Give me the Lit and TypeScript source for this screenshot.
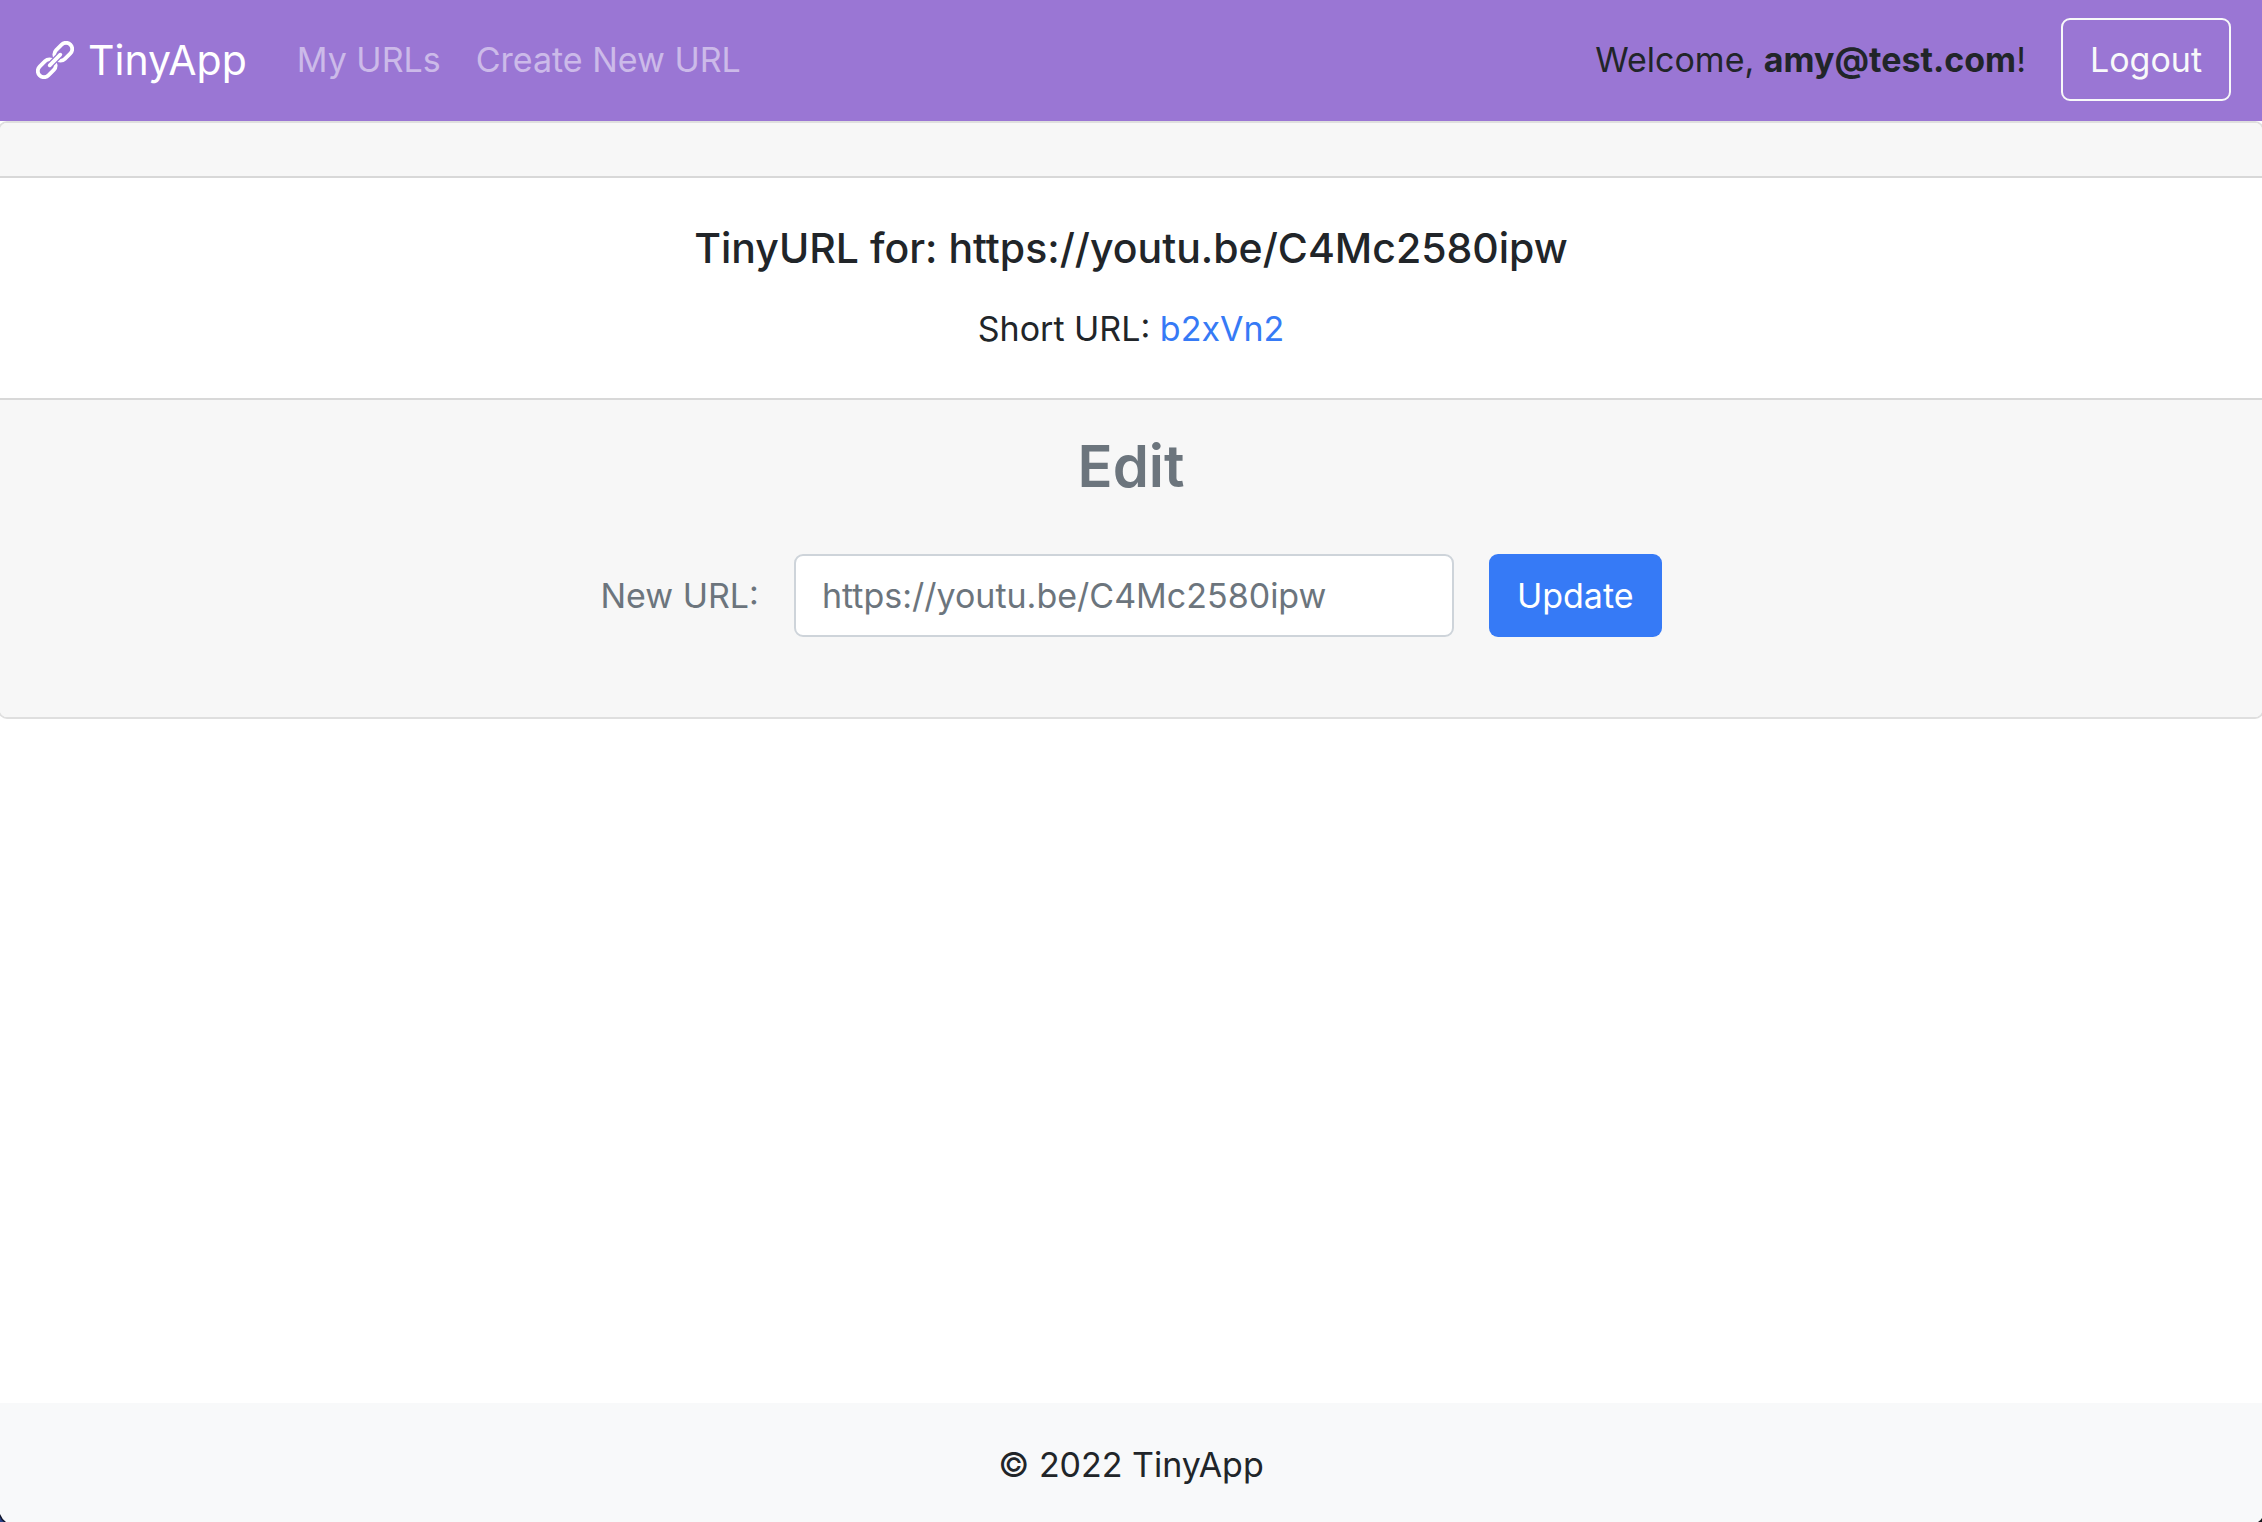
import { LitElement, html, css } from "lit";
import { customElement, property } from "lit/decorators.js";

@customElement("site-nav")
class SiteNav extends LitElement {
  @property() email = "";

  static styles = css`
    :host {
      display: block;
    }
    .bar {
      display: flex;
      align-items: center;
      padding: 18px 31px 20px 36px;
      background: #9a76d4;
      color: #212529;
    }
    .brand {
      display: flex;
      align-items: center;
      gap: 14px;
      margin-right: 50px;
      font-size: 41px;
      line-height: 64px;
      color: #fff;
      text-decoration: none;
    }
    .links {
      display: flex;
      gap: 35px;
      flex: 1;
      margin: 0;
      padding: 0;
      list-style: none;
    }
    .link {
      color: rgba(255, 255, 255, 0.5);
      text-decoration: none;
    }
    .session {
      display: flex;
      align-items: center;
      gap: 35px;
      margin: 0;
    }
    .logout {
      padding: 13px 27px;
      border: 2px solid #f8f9fa;
      border-radius: 9px;
      background: transparent;
      color: #f8f9fa;
      font: inherit;
    }
  `;

  render() {
    return html`
      <nav class="bar">
        <a class="brand" href="#">
          <svg width="38" height="38" viewBox="0 0 38 38" fill="none" aria-hidden="true">
            <g transform="rotate(-45 19 19)" stroke-linecap="round">
              <rect x="-2.8" y="12.8" width="20.2" height="12.4" rx="6.2" stroke="#fff" stroke-width="3.8" />
              <rect x="20.6" y="12.8" width="20.2" height="12.4" rx="6.2" stroke="#fff" stroke-width="3.8" />
              <path d="M11 19H27" stroke="#9a76d4" stroke-width="6.4" stroke-linecap="butt" />
              <path d="M11.5 19H26.5" stroke="#fff" stroke-width="3.8" />
            </g>
          </svg>
          <span>TinyApp</span>
        </a>
        <ul class="links">
          <li><a class="link" href="#urls">My URLs</a></li>
          <li><a class="link" href="#new">Create New URL</a></li>
        </ul>
        <form class="session" @submit=${(e: Event) => e.preventDefault()}>
          <span>Welcome, <b>${this.email}</b>!</span>
          <button class="logout" type="submit">Logout</button>
        </form>
      </nav>
    `;
  }
}

@customElement("url-card")
class UrlCard extends LitElement {
  @property() longUrl = "";
  @property() shortId = "";

  static styles = css`
    :host {
      display: block;
      overflow: hidden;
    }
    .card {
      margin: 0 -2px;
      border: 2px solid #dfdfdf;
      border-radius: 9px;
      background: #fff;
      text-align: center;
      overflow: hidden;
    }
    .head {
      height: 53px;
      border-bottom: 2px solid #d8d8d8;
      background: #f7f7f7;
    }
    .body {
      padding: 44px 44px 43px;
    }
    .title {
      margin: 0 0 27px;
      font-size: 41px;
      font-weight: 500;
      line-height: 53px;
    }
    .text {
      margin: 0;
    }
    .short {
      color: #367af6;
      text-decoration: none;
    }
    .foot {
      padding: 35px 44px 80px;
      border-top: 2px solid #d8d8d8;
      background: #f7f7f7;
      color: #6c757d;
    }
    .heading {
      margin: 0 0 57px;
      font-size: 58px;
      font-weight: 600;
      line-height: 62px;
    }
    .form {
      display: flex;
      justify-content: center;
      align-items: center;
      gap: 35px;
    }
    .input {
      box-sizing: border-box;
      width: 660px;
      height: 83px;
      padding: 13px 26px;
      border: 2px solid #ced4da;
      border-radius: 9px;
      background: #fff;
      color: #495057;
      font: inherit;
    }
    .input::placeholder {
      color: #6c757d;
      opacity: 1;
    }
    .update {
      padding: 15px 28px;
      border: 0;
      border-radius: 9px;
      background: #367af6;
      color: #fff;
      font: inherit;
    }
  `;

  render() {
    return html`
      <section class="card">
        <div class="head"></div>
        <div class="body">
          <h5 class="title">TinyURL for: ${this.longUrl}</h5>
          <p class="text">Short URL: <a class="short" href="#${this.shortId}">${this.shortId}</a></p>
        </div>
        <div class="foot">
          <h3 class="heading">Edit</h3>
          <form class="form" @submit=${(e: Event) => e.preventDefault()}>
            <label for="new-url">New URL:</label>
            <input class="input" id="new-url" type="text" placeholder=${this.longUrl} />
            <button class="update" type="submit">Update</button>
          </form>
        </div>
      </section>
    `;
  }
}

@customElement("app-root")
class AppRoot extends LitElement {
  static styles = css`
    :host {
      display: block;
      font-family: Inter, "Liberation Sans", sans-serif;
      font-size: 34px;
      line-height: 53px;
      color: #212529;
      background: #fff;
    }
    .page {
      position: relative;
      display: flex;
      flex-direction: column;
      min-height: 100vh;
    }
    .main {
      flex: 1;
    }
    .footer {
      padding: 35px 36px 31px;
      background: #f8f9fa;
      text-align: center;
    }
    .corner {
      position: absolute;
      bottom: 0;
    }
    .left {
      left: 0;
    }
    .right {
      right: 0;
    }
  `;

  render() {
    return html`
      <div class="page">
        <site-nav email="amy@test.com"></site-nav>
        <main class="main">
          <url-card longUrl="https://youtu.be/C4Mc2580ipw" shortId="b2xVn2"></url-card>
        </main>
        <footer class="footer">© 2022 TinyApp</footer>
        <svg class="corner left" width="6" height="8" viewBox="0 0 6 8" aria-hidden="true">
          <path d="M0 0Q2 5 6 8H0Z" fill="#10142a" />
          <path d="M0 3Q1 6 4 8H0Z" fill="#2b4288" />
        </svg>
        <svg class="corner right" width="4" height="4" viewBox="0 0 4 4" aria-hidden="true">
          <path d="M4 0Q3 2 0 4H4Z" fill="#15171c" />
        </svg>
      </div>
    `;
  }
}
